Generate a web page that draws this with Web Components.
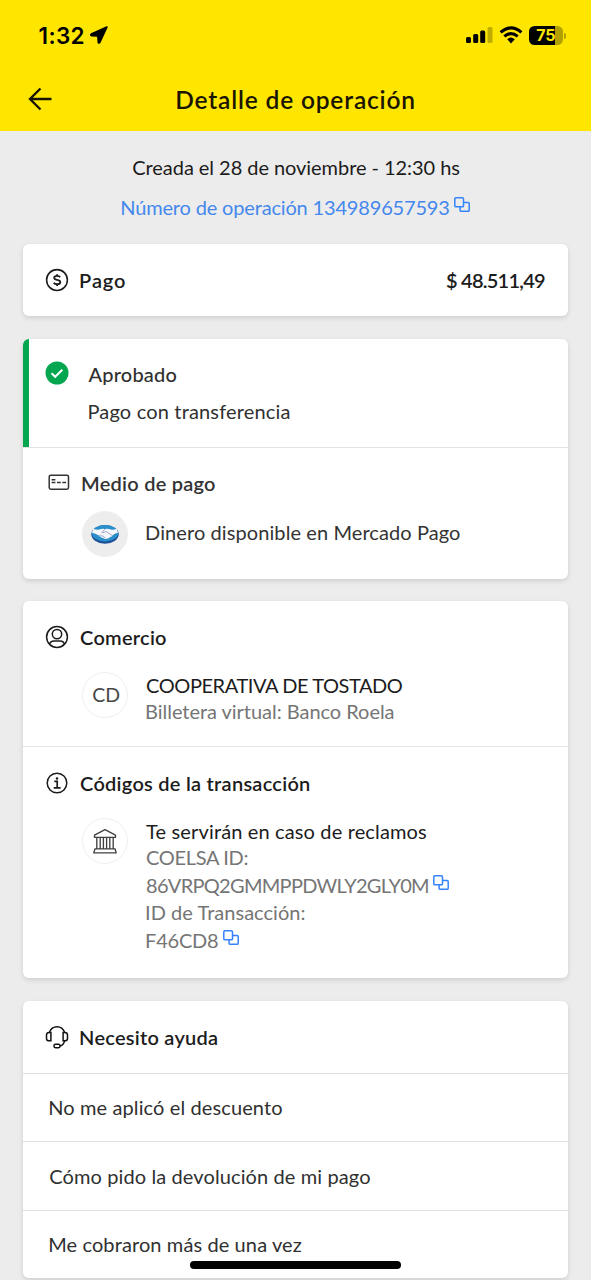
<!DOCTYPE html>
<html lang="es">
<head>
<meta charset="utf-8">
<title>Detalle de operación</title>
<style>
html,body{margin:0;height:1280px;overflow:hidden;background:#ececec}
body{font-family:Lato,"Open Sans",sans-serif;font-size:20px;color:#1c1c1c}
</style>
</head>
<body>
<payment-detail></payment-detail>
<script>
/* One line of text, tracked so that its ink spans `span` pixels. */
const pen = document.createElement('canvas').getContext('2d');
customElements.define('text-line', class extends HTMLElement {
  connectedCallback() {
    const root = this.attachShadow({mode: 'open'});
    root.innerHTML = `<style>
      :host{display:block;white-space:nowrap;line-height:26px;height:26px;font-weight:400}
      :host([medium]){font-weight:500}
      :host([strong]){font-weight:600}
      :host([soft]){color:#757575}
      </style><slot></slot>`;
    const span = +this.getAttribute('span');
    const text = this.textContent;
    const cs = getComputedStyle(this);
    pen.font = `${cs.fontWeight} ${cs.fontSize} ${cs.fontFamily}`;
    const m = pen.measureText(text);
    const ink = m.actualBoundingBoxLeft + m.actualBoundingBoxRight;
    const gap = (span - ink) / (text.length - 1);
    this.style.letterSpacing = gap.toFixed(3) + 'px';
    this.style.marginLeft = (m.actualBoundingBoxLeft + .6).toFixed(2) + 'px';
    this.style.marginRight = (m.actualBoundingBoxRight - m.width - gap).toFixed(2) + 'px';
  }
});

const ICONS = {
  locate: [18, 18, '<path d="M16.9 1.1 1.3 8.1c-.9.5-.6 1.4.2 1.5l6.3.4.5 6.3c.1.9 1.1 1 1.5.2z" fill="#000" stroke="#000" stroke-width="1.6" stroke-linejoin="round"/>'],
  signal: [28, 18, '<g fill="#000"><rect x="0" y="11" width="5" height="6" rx="1.5"/><rect x="7.2" y="8" width="5" height="9" rx="1.5"/><rect x="14.2" y="4.6" width="5" height="12.4" rx="1.5"/><rect x="21.5" y="1" width="5" height="16" rx="1.5" opacity=".25"/></g>'],
  wifi: [24, 18, '<g fill="none" stroke="#000" stroke-width="3.1"><path d="M1.6 6.4Q12-2.6 22.4 6.4"/><path d="M5.3 10.4Q12 4.8 18.7 10.4"/></g><path d="M8.2 13.2Q12 10 15.8 13.2L12 17.4z" fill="#000"/>'],
  back: [24, 24, '<path d="M23.5 12H2M12.5 1.5 2 12l10.5 10.5" fill="none" stroke="#1a1500" stroke-width="2.4"/>'],
  copy: [16, 16, '<g fill="none" stroke="currentColor" stroke-width="1.5"><rect x=".8" y=".8" width="8.7" height="9" rx="1.1"/><path d="M9.5 5.5h4.6q1.1 0 1.1 1.1v6.6q0 1.1-1.1 1.1H7.2q-1.1 0-1.1-1.1V9.8"/></g>'],
  money: [24, 24, '<g fill="none" stroke="#1c1c1c" stroke-width="1.55"><circle cx="12" cy="12" r="10.4"/><path d="M15.1 9.2Q14.3 7.9 12.1 7.9 9.2 7.9 9.2 9.8q0 1.7 2.8 2.1 3.3.4 3.3 2.3 0 2-3.2 2-2.5 0-3.4-1.5M12.1 6.2v1.7M12.1 16.2v1.8" stroke-width="1.8"/></g>'],
  check: [24, 24, '<circle cx="12" cy="12" r="11.5" fill="#04a650"/><path d="m6.5 12.3 3.7 3.5 7.1-7" fill="none" stroke="#fff" stroke-width="2"/>'],
  card: [22, 17, '<g fill="none" stroke="#333" stroke-width="1.5"><rect x="1.2" y="1.2" width="19.3" height="14" rx="1.6"/><path d="M3.6 5.8h3.8M3.6 8.6h3.8M9 8.6h3.8M14.3 8.6h3.7"/></g>'],
  user: [24, 24, '<g fill="none" stroke="#1c1c1c" stroke-width="1.5"><circle cx="12" cy="12" r="10.4"/><circle cx="12" cy="9.1" r="4.7"/><path d="M4.7 19.2Q5.2 15.9 9 15.9h6q3.8 0 4.3 3.3"/></g>'],
  info: [24, 24, '<g fill="none" stroke="#1c1c1c" stroke-width="1.5"><circle cx="12" cy="12" r="9.8"/><path d="M9.3 10.4h2.9v6.4M8.7 16.9h6.9" stroke-width="1.7"/></g><circle cx="12" cy="7.4" r="1.25" fill="#1c1c1c"/>'],
  bank: [26, 26, '<g fill="none" stroke="#404040" stroke-width="1.35" stroke-linejoin="round"><path d="M2.5 9.3V7.1L13 1.6l10.5 5.5v2.2zM4.8 9.5v11M8.200 9.500v11M11.400 9.500v11M14.600 9.500v11M17.800 9.500v11M21.200 9.500v11M3 20.800h20l1.200 4.100H1.800z"/></g>'],
  help: [24, 24, '<g fill="none" stroke="#111" stroke-width="1.5"><path d="M4.3 7.6Q6.5 1.8 12 1.8t7.7 5.8M19.5 15.8q-.8 4.3-4.4 5.1"/><path d="M5.9 7.4H4.3Q1.5 7.4 1.5 10v3.4q0 2.4 2.8 2.4h1.6zM18.1 7.4h1.6q2.8 0 2.8 2.6v3.4q0 2.4-2.8 2.4h-1.6z"/><rect x="9" y="19.3" width="6" height="3.4" rx="1.4"/></g>'],
  shake: [28, 20, '<ellipse cx="14" cy="10.3" rx="13.7" ry="9.4" fill="#1d5299"/><ellipse cx="14" cy="9.3" rx="13.1" ry="8.2" fill="#2b8fc9"/><path d="M2.4 4.8Q6 6.500 9 5.200Q11.500 4.200 14 5Q16.500 4.200 19 5.200Q22 6.500 25.600 4.800L27 8.800Q23.500 9.600 21.300 11.400Q20.800 13 19 13Q17.500 15 15.800 14.400Q13.800 15.600 12.500 14Q10.500 14.300 10 12.700Q8.200 12.800 7.800 11.400Q4.500 9.600 1 8.800z" fill="#f7f8fc"/><path d="M8.200 11.600q1.500-1.400 2.400.3 1.900-.5 2.200 1 1.300.1 1.100 1.300M14 5 10.900 8.300q2.200 1.100 3.900-1l6.200 4" fill="none" stroke="#8a8fc0" stroke-width=".8"/>']
};
customElements.define('line-icon', class extends HTMLElement {
  connectedCallback() {
    const [w, h, body] = ICONS[this.getAttribute('name')];
    this.attachShadow({mode: 'open'}).innerHTML =
      `<style>:host{display:block;flex:none;width:${w}px;height:${h}px}svg{display:block}</style>
       <svg width="${w}" height="${h}" viewBox="0 0 ${w} ${h}">${body}</svg>`;
  }
});

const define = (name, markup) => customElements.define(name, class extends HTMLElement {
  connectedCallback() { this.attachShadow({mode: 'open'}).innerHTML = markup; }
});

define('battery-level', `<style>
  :host{display:flex;align-items:center;gap:1.5px}
  .cell{width:34px;height:19px;border-radius:5.5px;background:linear-gradient(90deg,#000 26px,#b3a100 26px);color:#ffe600;
    font:700 16px/19px Inter,sans-serif;display:flex;justify-content:center}
  i{width:2px;height:6px;border-radius:0 2px 2px 0;background:#b3a100}
  text-line{font-weight:700;line-height:19px;height:19px}
  </style><div class="cell"><text-line span="19">75</text-line></div><i></i>`);

define('status-bar', `<style>
  :host{display:flex;height:70px;box-sizing:border-box;padding:26px 25px 0 39px;align-items:flex-start;color:#000}
  .time{font-family:Inter,sans-serif;font-size:22.5px}
  .time text-line{line-height:20px;height:20px}
  .send{margin:0 0 0 6px}.fill{flex:1}
  .sig{margin-right:5px}.wifi{margin-right:6px}
  </style>
  <div class="time"><text-line strong span="44">1:32</text-line></div><line-icon class="send" name="locate"></line-icon>
  <div class="fill"></div><line-icon class="sig" name="signal"></line-icon><line-icon class="wifi" name="wifi"></line-icon><battery-level></battery-level>`);

define('nav-bar', `<style>
  :host{display:grid;grid-template-columns:1fr auto 1fr;height:61.5px;box-sizing:border-box;padding:17px 28px 0;color:#1a1500}
  .t{font-size:24.5px}
  </style><line-icon name="back"></line-icon><div class="t"><text-line strong span="237">Detalle de operación</text-line></div><span></span>`);

define('copy-row', `<style>:host{display:flex;align-items:flex-start;gap:5px}line-icon{color:#3483fa;margin-top:3px}</style>
  <slot></slot><line-icon name="copy"></line-icon>`);

define('panel-card', `<style>:host{display:block;background:#fff;border-radius:6px;box-shadow:0 2px 5px rgba(0,0,0,.13);margin:0 23px;overflow:hidden}</style><slot></slot>`);

/* A card section: heading icon in the left column, content beside it. */
define('card-section', `<style>
  :host{display:grid;grid-template-columns:34.2px 1fr;box-sizing:border-box;padding-left:22.3px;align-content:start}
  :host([ruled]){border-top:1.5px solid #e4e4e4}
  ::slotted(line-icon){margin-top:.9px}
  </style><slot name="icon"></slot><div><slot></slot></div>`);

define('round-badge', `<style>
  :host{display:flex;flex:none;width:46px;height:46px;border-radius:50%;box-sizing:border-box;border:1.5px solid #efefef;align-items:center;justify-content:center;color:#484848;font-size:19.5px}
  :host([filled]){background:#ededed}
  </style><slot></slot>`);

define('help-option', `<style>:host{display:block;box-sizing:border-box;border-top:1.5px solid #e0e0e0;height:68.5px;padding:20.5px 26px 0 25.6px;color:#303030}</style><slot></slot>`);

define('payment-detail', `<style>
  :host{display:block;height:1280px;overflow:hidden;position:relative}
  header{background:#ffe600;height:131.4px}
  .intro{display:flex;flex-direction:column;align-items:center;height:112.7px;box-sizing:border-box;padding-top:22.6px;gap:14.4px}
  .op{color:#4588ed}
  panel-card{margin-bottom:22.5px}
  .pay{height:72px;padding-top:23.4px}
  .between{display:flex;justify-content:space-between;padding-right:23px}
  .ok{height:108.6px;border-left:6px solid #04a650;padding:22.3px 0 0 16.3px;grid-template-columns:42.6px 1fr;color:#303030}
  .ok>line-icon{margin-top:0}
  .ok .second{margin-top:11px}
  .method{height:131.4px;padding-top:22.3px;color:#333}
  .method>line-icon{margin:3.8px 0 0 3.2px}
  .method .head{position:relative;left:2px}
  .item{display:flex;gap:17px;margin-left:3px;align-items:flex-start}
  .shop{height:145px;padding-top:22.8px}
  .codes{height:232px;padding-top:22.9px}
  .help{height:72px;padding-top:23.7px}
  .home{position:absolute;left:190px;top:1261px;width:211px;height:7.5px;border-radius:4px;background:#000}
  </style>
  <header><status-bar></status-bar><nav-bar></nav-bar></header>
  <div class="intro">
    <text-line span="327">Creada el 28 de noviembre - 12:30 hs</text-line>
    <copy-row class="op"><text-line span="328">Número de operación 134989657593</text-line></copy-row>
  </div>
  <panel-card>
    <card-section class="pay"><line-icon slot="icon" name="money"></line-icon>
      <div class="between"><text-line strong span="45">Pago</text-line><text-line strong span="99">$ 48.511,49</text-line></div>
    </card-section>
  </panel-card>
  <panel-card>
    <card-section class="ok"><line-icon slot="icon" name="check"></line-icon>
      <text-line medium span="88">Aprobado</text-line>
      <text-line class="second" span="201">Pago con transferencia</text-line>
    </card-section>
    <card-section class="method" ruled><line-icon slot="icon" name="card"></line-icon>
      <text-line class="head" strong span="133">Medio de pago</text-line>
      <div class="item" style="margin-top:14.4px"><round-badge filled><line-icon name="shake"></line-icon></round-badge>
        <text-line span="314" style="margin-top:8.4px">Dinero disponible en Mercado Pago</text-line></div>
    </card-section>
  </panel-card>
  <panel-card>
    <card-section class="shop"><line-icon slot="icon" name="user"></line-icon>
      <text-line strong span="86">Comercio</text-line>
      <div class="item" style="margin-top:22.6px"><round-badge><text-line span="27">CD</text-line></round-badge>
        <div><text-line span="258">COOPERATIVA DE TOSTADO</text-line><text-line soft span="248">Billetera virtual: Banco Roela</text-line></div></div>
    </card-section>
    <card-section class="codes" ruled><line-icon slot="icon" name="info"></line-icon>
      <text-line strong span="230">Códigos de la transacción</text-line>
      <div class="item" style="margin-top:21.8px"><round-badge><line-icon name="bank"></line-icon></round-badge>
        <div><text-line span="280">Te servirán en caso de reclamos</text-line>
        <text-line soft span="102">COELSA ID:</text-line>
        <copy-row style="margin-top:2px"><text-line soft span="282">86VRPQ2GMMPPDWLY2GLY0M</text-line></copy-row>
        <text-line soft span="159" style="margin-top:1.3px">ID de Transacción:</text-line>
        <copy-row style="margin-top:2.4px"><text-line soft span="72">F46CD8</text-line></copy-row></div></div>
    </card-section>
  </panel-card>
  <panel-card>
    <card-section class="help"><line-icon slot="icon" name="help"></line-icon>
      <text-line strong span="137">Necesito ayuda</text-line></card-section>
    <help-option><text-line span="233">No me aplicó el descuento</text-line></help-option>
    <help-option><text-line span="321">Cómo pido la devolución de mi pago</text-line></help-option>
    <help-option><text-line span="253">Me cobraron más de una vez</text-line></help-option>
  </panel-card>
  <div class="home"></div>`);
</script>
</body>
</html>
